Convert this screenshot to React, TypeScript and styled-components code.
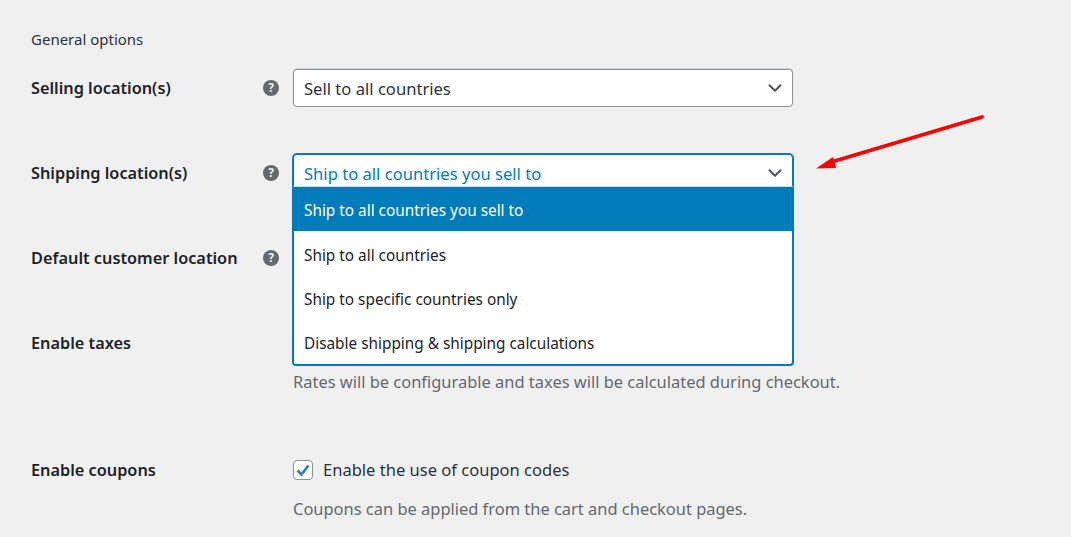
import React from "react";
import styled, { createGlobalStyle } from "styled-components";
import { ChevronDown } from "lucide-react";

const GlobalStyle = createGlobalStyle`
  html, body {
    margin: 0;
    padding: 0;
    background: #f0f0f1;
    overflow: hidden;
  }
  body {
    font-family: "Noto Sans", "Open Sans", "Liberation Sans", sans-serif;
    color: #1d2327;
  }
`;

const Page = styled.main`
  position: relative;
  width: 1071px;
  height: 537px;
  padding: 29px 0 0 31px;
  box-sizing: border-box;
  overflow: hidden;
`;

const SectionTitle = styled.h2`
  margin: 0 0 20px;
  height: 20px;
  font-size: 15px;
  line-height: 20px;
  font-weight: 400;
  color: #2c3338;
`;

const Row = styled.section<{ $height: number }>`
  display: grid;
  grid-template-columns: 248px 500px;
  column-gap: 14px;
  height: ${(p) => p.$height}px;
  align-items: start;
`;

const LabelCell = styled.div`
  display: flex;
  justify-content: space-between;
  align-items: center;
  height: 38px;
`;

const Label = styled.label`
  font-size: 16.3px;
  font-weight: 600;
  color: #1d2327;
  line-height: 22px;
  white-space: nowrap;
`;

const HelpBadge = styled.span`
  display: flex;
  align-items: center;
  justify-content: center;
  width: 16px;
  height: 16px;
  border-radius: 50%;
  background: #646970;
  color: #f0f0f1;
  font-size: 12px;
  font-weight: 700;
  line-height: 16px;
`;

const FieldCell = styled.div`
  position: relative;
  display: flex;
  flex-direction: column;
`;

const Select = styled.div<{ $open?: boolean }>`
  display: flex;
  align-items: center;
  justify-content: space-between;
  height: 38px;
  box-sizing: border-box;
  padding: 0 6px 0 10px;
  background: #fff;
  border: 1px solid ${(p) => (p.$open ? "#007cba" : "#8c8f94")};
  border-radius: 4px;
  font-size: 16.6px;
  color: ${(p) => (p.$open ? "#007cba" : "#2c3338")};
  box-shadow: ${(p) => (p.$open ? "0 0 0 1px #007cba" : "0 -1px 0 #c9d6df")};
  svg {
    color: #50575e;
  }
`;

const Menu = styled.ul`
  position: absolute;
  top: 32px;
  left: -1px;
  width: 502px;
  height: 180px;
  box-sizing: border-box;
  margin: 0;
  padding: 0;
  list-style: none;
  background: #fff;
  border: 2px solid #007cba;
  border-top: 1px solid #c5d9e8;
  border-radius: 0 0 4px 4px;
  overflow: hidden;
`;

const MenuItem = styled.li<{ $active?: boolean }>`
  display: flex;
  align-items: center;
  height: 44.4px;
  box-sizing: border-box;
  padding-top: 2px;
  font-size: 15.35px;
  color: ${(p) => (p.$active ? "#fff" : "#1d2327")};
  background: ${(p) => (p.$active ? "#007cba" : "transparent")};
  margin: ${(p) => (p.$active ? "0 -2px" : "0")};
  padding-left: ${(p) => (p.$active ? "12px" : "10px")};
`;

const Description = styled.p<{ $top: number }>`
  margin: ${(p) => p.$top}px 0 0;
  font-size: 16.45px;
  line-height: 22px;
  color: #646970;
  white-space: nowrap;
`;

const CheckRow = styled.div`
  display: flex;
  align-items: center;
  gap: 10px;
  height: 38px;
  font-size: 16.55px;
  color: #2c3338;
`;

const CheckText = styled.span`
  margin-top: -2px;
`;

const CheckBox = styled.span`
  display: flex;
  align-items: center;
  justify-content: center;
  width: 20px;
  height: 20px;
  box-sizing: border-box;
  background: #fff;
  border: 1px solid #8c8f94;
  border-radius: 4px;
`;

const Arrow = styled.svg`
  position: absolute;
  left: 800px;
  top: 100px;
`;

const HelpIcon = () => <HelpBadge>?</HelpBadge>;

export default function App() {
  return (
    <Page>
      <GlobalStyle />
      <SectionTitle>General options</SectionTitle>

      <Row $height={85}>
        <LabelCell>
          <Label>Selling location(s)</Label>
          <HelpIcon />
        </LabelCell>
        <FieldCell>
          <Select>
            Sell to all countries
            <ChevronDown size={22} strokeWidth={2.3} />
          </Select>
        </FieldCell>
      </Row>

      <Row $height={85}>
        <LabelCell>
          <Label>Shipping location(s)</Label>
          <HelpIcon />
        </LabelCell>
        <FieldCell>
          <Select $open>
            Ship to all countries you sell to
            <ChevronDown size={22} strokeWidth={2.3} />
          </Select>
          <Menu>
            <MenuItem $active>Ship to all countries you sell to</MenuItem>
            <MenuItem>Ship to all countries</MenuItem>
            <MenuItem>Ship to specific countries only</MenuItem>
            <MenuItem>Disable shipping &amp; shipping calculations</MenuItem>
          </Menu>
        </FieldCell>
      </Row>

      <Row $height={85}>
        <LabelCell>
          <Label>Default customer location</Label>
          <HelpIcon />
        </LabelCell>
      </Row>

      <Row $height={127}>
        <LabelCell>
          <Label>Enable taxes</Label>
        </LabelCell>
        <FieldCell>
          <Description $top={47}>
            Rates will be configurable and taxes will be calculated during checkout.
          </Description>
        </FieldCell>
      </Row>

      <Row $height={86}>
        <LabelCell>
          <Label>Enable coupons</Label>
        </LabelCell>
        <FieldCell>
          <CheckRow>
            <CheckBox>
              <svg width="16" height="16" viewBox="0 0 16 16">
                <path d="M2.5 8.5 L6.5 12.5 L13.5 3.5" fill="none" stroke="#2f7fc1" strokeWidth="2.8" />
              </svg>
            </CheckBox>
            <CheckText>Enable the use of coupon codes</CheckText>
          </CheckRow>
          <Description $top={9}>
            Coupons can be applied from the cart and checkout pages.
          </Description>
        </FieldCell>
      </Row>

      <Arrow width="190" height="80" viewBox="800 100 190 80">
        <line x1="982" y1="117" x2="828" y2="163" stroke="#f00" strokeWidth="3.8" strokeLinecap="round" />
        <path d="M816 168.5 L833 157 L836 168 Z" fill="#f00" />
      </Arrow>
    </Page>
  );
}
